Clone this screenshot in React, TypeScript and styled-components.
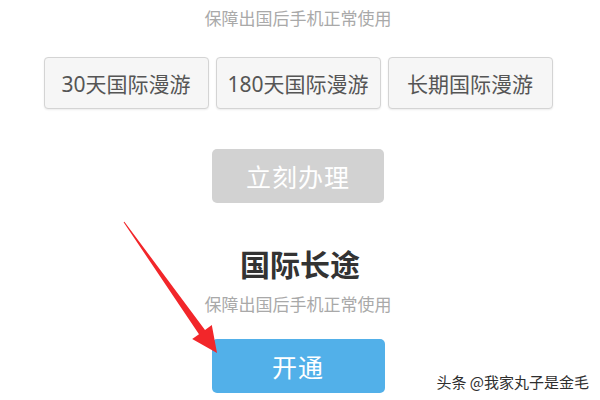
import React from "react";
import styled, { createGlobalStyle } from "styled-components";

const Global = createGlobalStyle`
  html, body { margin: 0; padding: 0; background: #ffffff; }
  body { font-family: "Noto Sans CJK SC", "Noto Sans", sans-serif; }
`;

const Page = styled.div`
  position: relative;
  width: 600px;
  height: 400px;
  overflow: hidden;
  background: #ffffff;
  display: flex;
  flex-direction: column;
  align-items: center;
  padding: 7px 4px 0 0;
  box-sizing: border-box;
`;

const Sub = styled.div<{ $mt: number }>`
  margin-top: ${(p) => p.$mt}px;
  font-size: 17px;
  line-height: 22px;
  color: #a9a9a9;
`;

const Row = styled.div`
  margin-top: 28px;
  display: flex;
  gap: 7px;
`;

const Chip = styled.div`
  width: 165px;
  height: 52px;
  box-sizing: border-box;
  border: 1.5px solid #d4d4d4;
  border-radius: 4px;
  background: #f6f6f6;
  box-shadow: 0 1px 2px rgba(0, 0, 0, 0.08);
  display: flex;
  align-items: center;
  justify-content: center;
  font-size: 21px;
  color: #555555;
  font-family: "Noto Sans", "Noto Sans CJK SC", sans-serif;
`;

const Action = styled.div<{ $bg: string; $mt: number; $w: number }>`
  margin-top: ${(p) => p.$mt}px;
  width: ${(p) => p.$w}px;
  height: 54px;
  border-radius: 5px;
  background: ${(p) => p.$bg};
  color: #ffffff;
  font-size: 25px;
  display: flex;
  align-items: center;
  justify-content: center;
  letter-spacing: 1px;
`;

const Title = styled.div`
  margin-top: 42px;
  font-size: 30px;
  line-height: 36px;
  font-weight: 700;
  color: #333333;
  padding-left: 4px;
`;

const Watermark = styled.div`
  position: absolute;
  right: 11px;
  bottom: 9px;
  font-size: 15px;
  line-height: 18px;
  color: #2e2e2e;
  text-shadow: 0 0 2px #ffffff, 0 0 1px #ffffff;
  font-family: "Noto Sans CJK SC", sans-serif;
`;

const ArrowLayer = styled.svg`
  position: absolute;
  left: 0;
  top: 0;
  width: 600px;
  height: 400px;
  pointer-events: none;
`;

export default function App() {
  return (
    <Page>
      <Global />
      <Sub $mt={0}>保障出国后手机正常使用</Sub>
      <Row>
        <Chip>30天国际漫游</Chip>
        <Chip>180天国际漫游</Chip>
        <Chip>长期国际漫游</Chip>
      </Row>
      <Action $bg="#d2d2d2" $mt={40} $w={172}>立刻办理</Action>
      <Title>国际长途</Title>
      <Sub $mt={12}>保障出国后手机正常使用</Sub>
      <Action $bg="#52b0e9" $mt={24} $w={173}>开通</Action>
      <ArrowLayer viewBox="0 0 600 400">
        <polygon
          points="124.4,221.7 205,330 211.8,325 217,353 192.2,339 199,334.2 123.6,222.3"
          fill="#f2262a"
        />
      </ArrowLayer>
      <Watermark>头条 @我家丸子是金毛</Watermark>
    </Page>
  );
}
